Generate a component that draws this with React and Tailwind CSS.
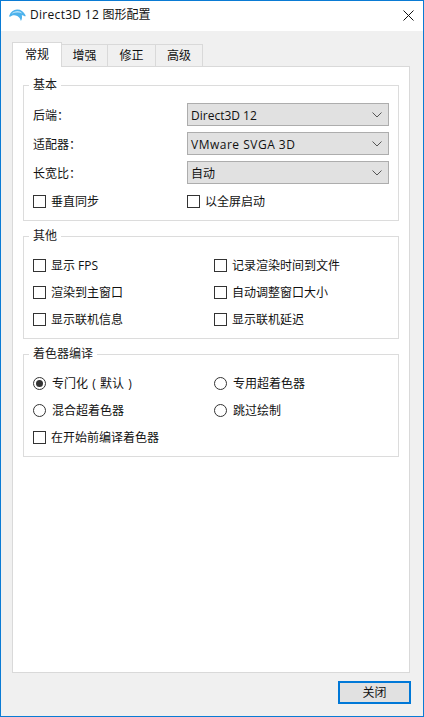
const FONT = "font-['Open_Sans','Noto_Sans_CJK_SC',sans-serif]";

function Dolphin() {
  return (
    <svg width="17" height="13" viewBox="0 0 17 13" className="shrink-0">
      <path
        d="M0.300 6.500C1.500 3 4.500 0.800 8 0.600c3.500-.2 6.500 1.700 8.400 5.500.5 1.200-.2 1.800-1.100 1-.8-.7-1.600-1.100-2.500-1.200.5 2.300.2 4.500-.9 6-.5-2.200-1.700-4-3.600-5C5.700 5.800 3.500 5.900 1.500 7.600.6 8.300 0 7.500.300 6.500z"
        fill="#4db2ec"
      />
      <path d="M2.500 4.800C4.300 2.900 6.300 2 8.500 2c1.800 0 3.400.8 4.600 2.400C10 3.100 6.500 3.200 2.500 4.800z" fill="#b5e2fa" />
    </svg>
  );
}

function Group({ title, className, children }) {
  return (
    <fieldset className={`mx-[10px] border border-[#dcdcdc] ${className}`}>
      <legend className="ml-[5px] px-[4px] text-[12px] leading-[14px] text-[#1a1a1a]">{title}</legend>
      {children}
    </fieldset>
  );
}

function Combo({ label, value, spaced }) {
  return (
    <div className="flex h-[23px] items-center">
      <span className="w-[154px] pt-[2px] text-[12px]">{label}</span>
      <div className="flex h-[23px] w-[202px] items-center justify-between border border-[#adadad] bg-[#e1e1e1] pl-[3px] pr-[6px] text-[12px]">
        <span className={spaced ? "pt-[2px] tracking-[0.5px]" : "pt-[2px]"}>{value}</span>
        <svg width="10" height="6" viewBox="0 0 10 6">
          <path d="M0.500 0.500L5 5L9.500 0.500" fill="none" stroke="#555" strokeWidth="1" />
        </svg>
      </div>
    </div>
  );
}

function Check({ label, className = "" }) {
  return (
    <div className={`flex h-[13px] items-center gap-[5px] text-[12px] ${className}`}>
      <span className="h-[13px] w-[13px] shrink-0 border border-[#333] bg-white" />
      <span className="whitespace-nowrap">{label}</span>
    </div>
  );
}

function Radio({ label, checked }) {
  return (
    <div className="flex h-[13px] items-center gap-[6px] text-[12px]">
      <span className="flex h-[13px] w-[13px] shrink-0 items-center justify-center rounded-full border border-[#333] bg-white">
        {checked && <span className="h-[7px] w-[7px] rounded-full bg-[#333]" />}
      </span>
      <span className="whitespace-nowrap">{label}</span>
    </div>
  );
}

function Tab({ label, active, width }) {
  return active ? (
    <div
      className={`relative z-10 -mb-px flex h-[25px] items-center justify-center border border-b-0 border-[#d9d9d9] bg-white text-[12px] ${width}`}
    >
      {label}
    </div>
  ) : (
    <div
      className={`-ml-px flex h-[22px] items-center justify-center border border-b-0 border-[#d9d9d9] bg-[#f0f0f0] text-[12px] ${width}`}
    >
      {label}
    </div>
  );
}

export default function App() {
  return (
    <div className={`flex h-[717px] w-[424px] flex-col border border-[#0a7bd4] bg-[#f0f0f0] text-[#111] ${FONT}`}>
      {/* title bar */}
      <div className="flex h-[30px] shrink-0 items-center bg-white pb-[2px] pl-[8px] pr-[9px]">
        <Dolphin />
        <span className="ml-[4px] text-[12px]">
          <span className="tracking-[0.3px]">Direct3D 12 </span>图形配置
        </span>
        <svg width="11" height="11" viewBox="0 0 11 11" className="ml-auto">
          <path d="M0.500 0.500L10.500 10.500M10.500 0.500L0.500 10.500" stroke="#111" strokeWidth="1" fill="none" />
        </svg>
      </div>

      {/* tabs */}
      <div className="ml-[11px] mt-[11px] flex h-[24px] shrink-0 items-end">
        <Tab label="常规" active width="w-[50px]" />
        <Tab label="增强" width="w-[47px]" />
        <Tab label="修正" width="w-[49px]" />
        <Tab label="高级" width="w-[48px]" />
      </div>

      {/* panel */}
      <div className="ml-[11px] mr-[13px] h-[607px] shrink-0 border border-[#d9d9d9] bg-white pt-[11px]">
        <Group title="基本" className="h-[143px]">
          <div className="flex flex-col gap-[6px] pl-[9px] pt-[11px]">
            <Combo label="后端：" value="Direct3D 12" />
            <Combo label="适配器：" value="VMware SVGA 3D" spaced />
            <Combo label="长宽比：" value="自动" />
            <div className="mt-[5px] flex">
              <Check label="垂直同步" className="w-[154px]" />
              <Check label="以全屏启动" />
            </div>
          </div>
        </Group>
        <Group title="其他" className="mt-[8px] h-[110px]">
          <div className="grid grid-cols-[181px_1fr] gap-y-[14px] pl-[9px] pt-[16px]">
            <Check label="显示 FPS" />
            <Check label="记录渲染时间到文件" />
            <Check label="渲染到主窗口" />
            <Check label="自动调整窗口大小" />
            <Check label="显示联机信息" />
            <Check label="显示联机延迟" />
          </div>
        </Group>
        <Group title="着色器编译" className="mt-[8px] h-[110px]">
          <div className="grid grid-cols-[181px_1fr] gap-y-[14px] pl-[9px] pt-[16px]">
            <Radio
              label={
                <>
                  专门化<span className="inline-block w-[12px] text-center">(</span>默认
                  <span className="inline-block w-[12px] text-center">)</span>
                </>
              }
              checked
            />
            <Radio label="专用超着色器" />
            <Radio label="混合超着色器" />
            <Radio label="跳过绘制" />
            <Check label="在开始前编译着色器" className="col-span-2" />
          </div>
        </Group>
      </div>

      {/* footer */}
      <div className="flex justify-end pr-[12px] pt-[8px]">
        <div className="flex h-[23px] w-[73px] items-center justify-center border-2 border-[#0078d7] bg-[#e1e1e1] text-[12px]">
          关闭
        </div>
      </div>
    </div>
  );
}
